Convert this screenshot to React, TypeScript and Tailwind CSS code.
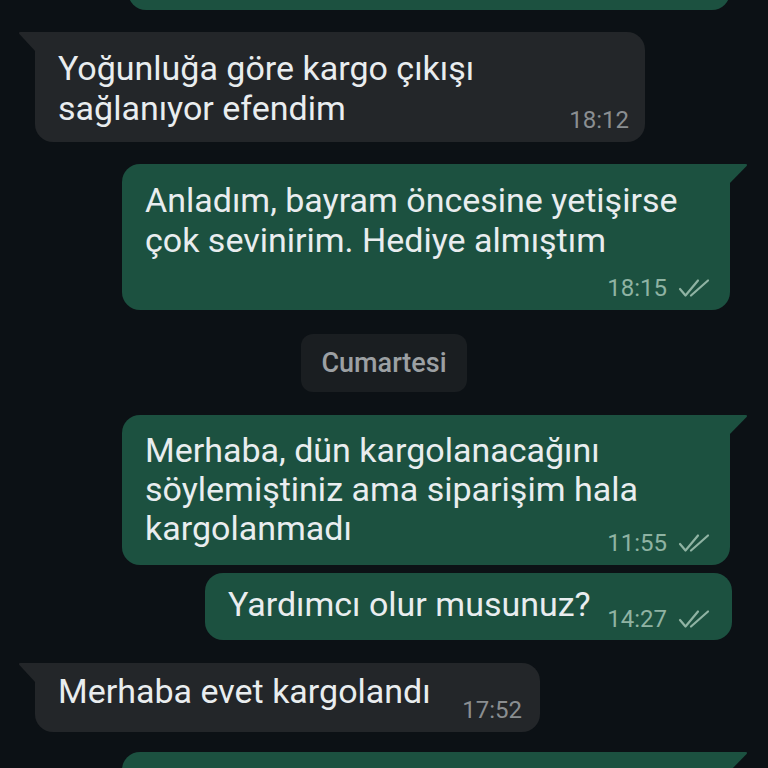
import React from 'react';

const GREEN = 'bg-[#1c5140]';
const GRAY = 'bg-[#232629]';

const InTail = () => (
  <svg className="absolute -left-[17px] top-0 w-[18px] h-[20px]" viewBox="0 0 18 20">
    <path d="M18 0 H2.5 Q0 0 1.4 2 L18 20 Z" fill="#232629" />
  </svg>
);

const OutTail = () => (
  <svg className="absolute -right-[18px] top-0 w-[19px] h-[20px]" viewBox="0 0 19 20">
    <path d="M0 0 H16.5 Q19 0 17.6 2 L0 20 Z" fill="#1c5140" />
  </svg>
);

const Checks = () => (
  <svg className="w-[33px] h-[20px]" viewBox="0 0 33 20" fill="none" stroke="#8fb3a3" strokeWidth="2.2" strokeLinecap="round" strokeLinejoin="round">
    <path d="M2 11 L7.5 17.5 L20 2.5" />
    <path d="M13 17.5 L30 2.5" />
  </svg>
);

const OutTime = ({ t }: { t: string }) => (
  <div className="flex items-center gap-[11px]">
    <span className="text-[24px] leading-[28px] text-[#8fb3a3]">{t}</span>
    <Checks />
  </div>
);

const InTime = ({ t }: { t: string }) => (
  <span className="text-[24px] leading-[28px] text-[#8a8e91]">{t}</span>
);

export default function App() {
  return (
    <div className="w-[768px] h-[768px] overflow-hidden bg-[#0c1115] font-['Roboto','Noto_Sans',sans-serif] text-[#e9edef]">
      <div className="flex flex-col">
        {/* previous outgoing message, mostly scrolled away */}
        <div className={`-mt-[30px] h-[40px] ml-[128px] w-[602px] rounded-[18px] ${GREEN}`} />

        {/* incoming */}
        <div className={`relative mt-[22px] ml-[35px] w-[610px] rounded-[18px] rounded-tl-none ${GRAY} pl-[23px] pr-[16px] pt-[16px] pb-[8px]`}>
          <InTail />
          <p className="text-[34px] leading-[40px]">
            Yoğunluğa göre kargo çıkışı
            <br />
            sağlanıyor efendim
          </p>
          <div className="-mt-[22px] flex justify-end">
            <InTime t="18:12" />
          </div>
        </div>

        {/* outgoing */}
        <div className={`relative mt-[22px] ml-[122px] w-[608px] rounded-[18px] rounded-tr-none ${GREEN} pl-[23px] pr-[19px] pt-[16px] pb-[8px]`}>
          <OutTail />
          <p className="text-[34px] leading-[40px]">
            Anladım, bayram öncesine yetişirse
            <br />
            çok sevinirim. Hediye almıştım
          </p>
          <div className="mt-[14px] flex justify-end">
            <OutTime t="18:15" />
          </div>
        </div>

        {/* day separator */}
        <div className="mt-[24px] self-center h-[58px] px-[20px] rounded-[12px] bg-[#1a1e21] flex items-center">
          <span className="text-[27px] font-medium text-[#9ca0a3]">Cumartesi</span>
        </div>

        <div className={`relative mt-[23px] ml-[122px] w-[608px] rounded-[18px] rounded-tr-none ${GREEN} pl-[23px] pr-[19px] pt-[16px] pb-[8px]`}>
          <OutTail />
          <p className="text-[34px] leading-[39px]">
            Merhaba, dün kargolanacağını
            <br />
            söylemiştiniz ama siparişim hala
            <br />
            kargolanmadı
          </p>
          <div className="-mt-[19px] flex justify-end">
            <OutTime t="11:55" />
          </div>
        </div>

        <div className={`mt-[8px] ml-[205px] w-[527px] rounded-[18px] ${GREEN} pl-[23px] pr-[21px] pt-[11px] pb-[7px] flex items-end justify-between`}>
          <p className="text-[34px] leading-[40px] mb-[9px]">Yardımcı olur musunuz?</p>
          <OutTime t="14:27" />
        </div>

        {/* incoming */}
        <div className={`relative mt-[23px] ml-[35px] w-[505px] rounded-[18px] rounded-tl-none ${GRAY} pl-[23px] pr-[18px] pt-[8px] pb-[8px] flex items-end justify-between`}>
          <InTail />
          <p className="text-[34px] leading-[40px] mb-[13px]">Merhaba evet kargolandı</p>
          <InTime t="17:52" />
        </div>

        <div className={`relative mt-[20px] ml-[122px] w-[608px] h-[80px] rounded-[18px] rounded-tr-none ${GREEN}`}>
          <OutTail />
        </div>
      </div>
    </div>
  );
}
